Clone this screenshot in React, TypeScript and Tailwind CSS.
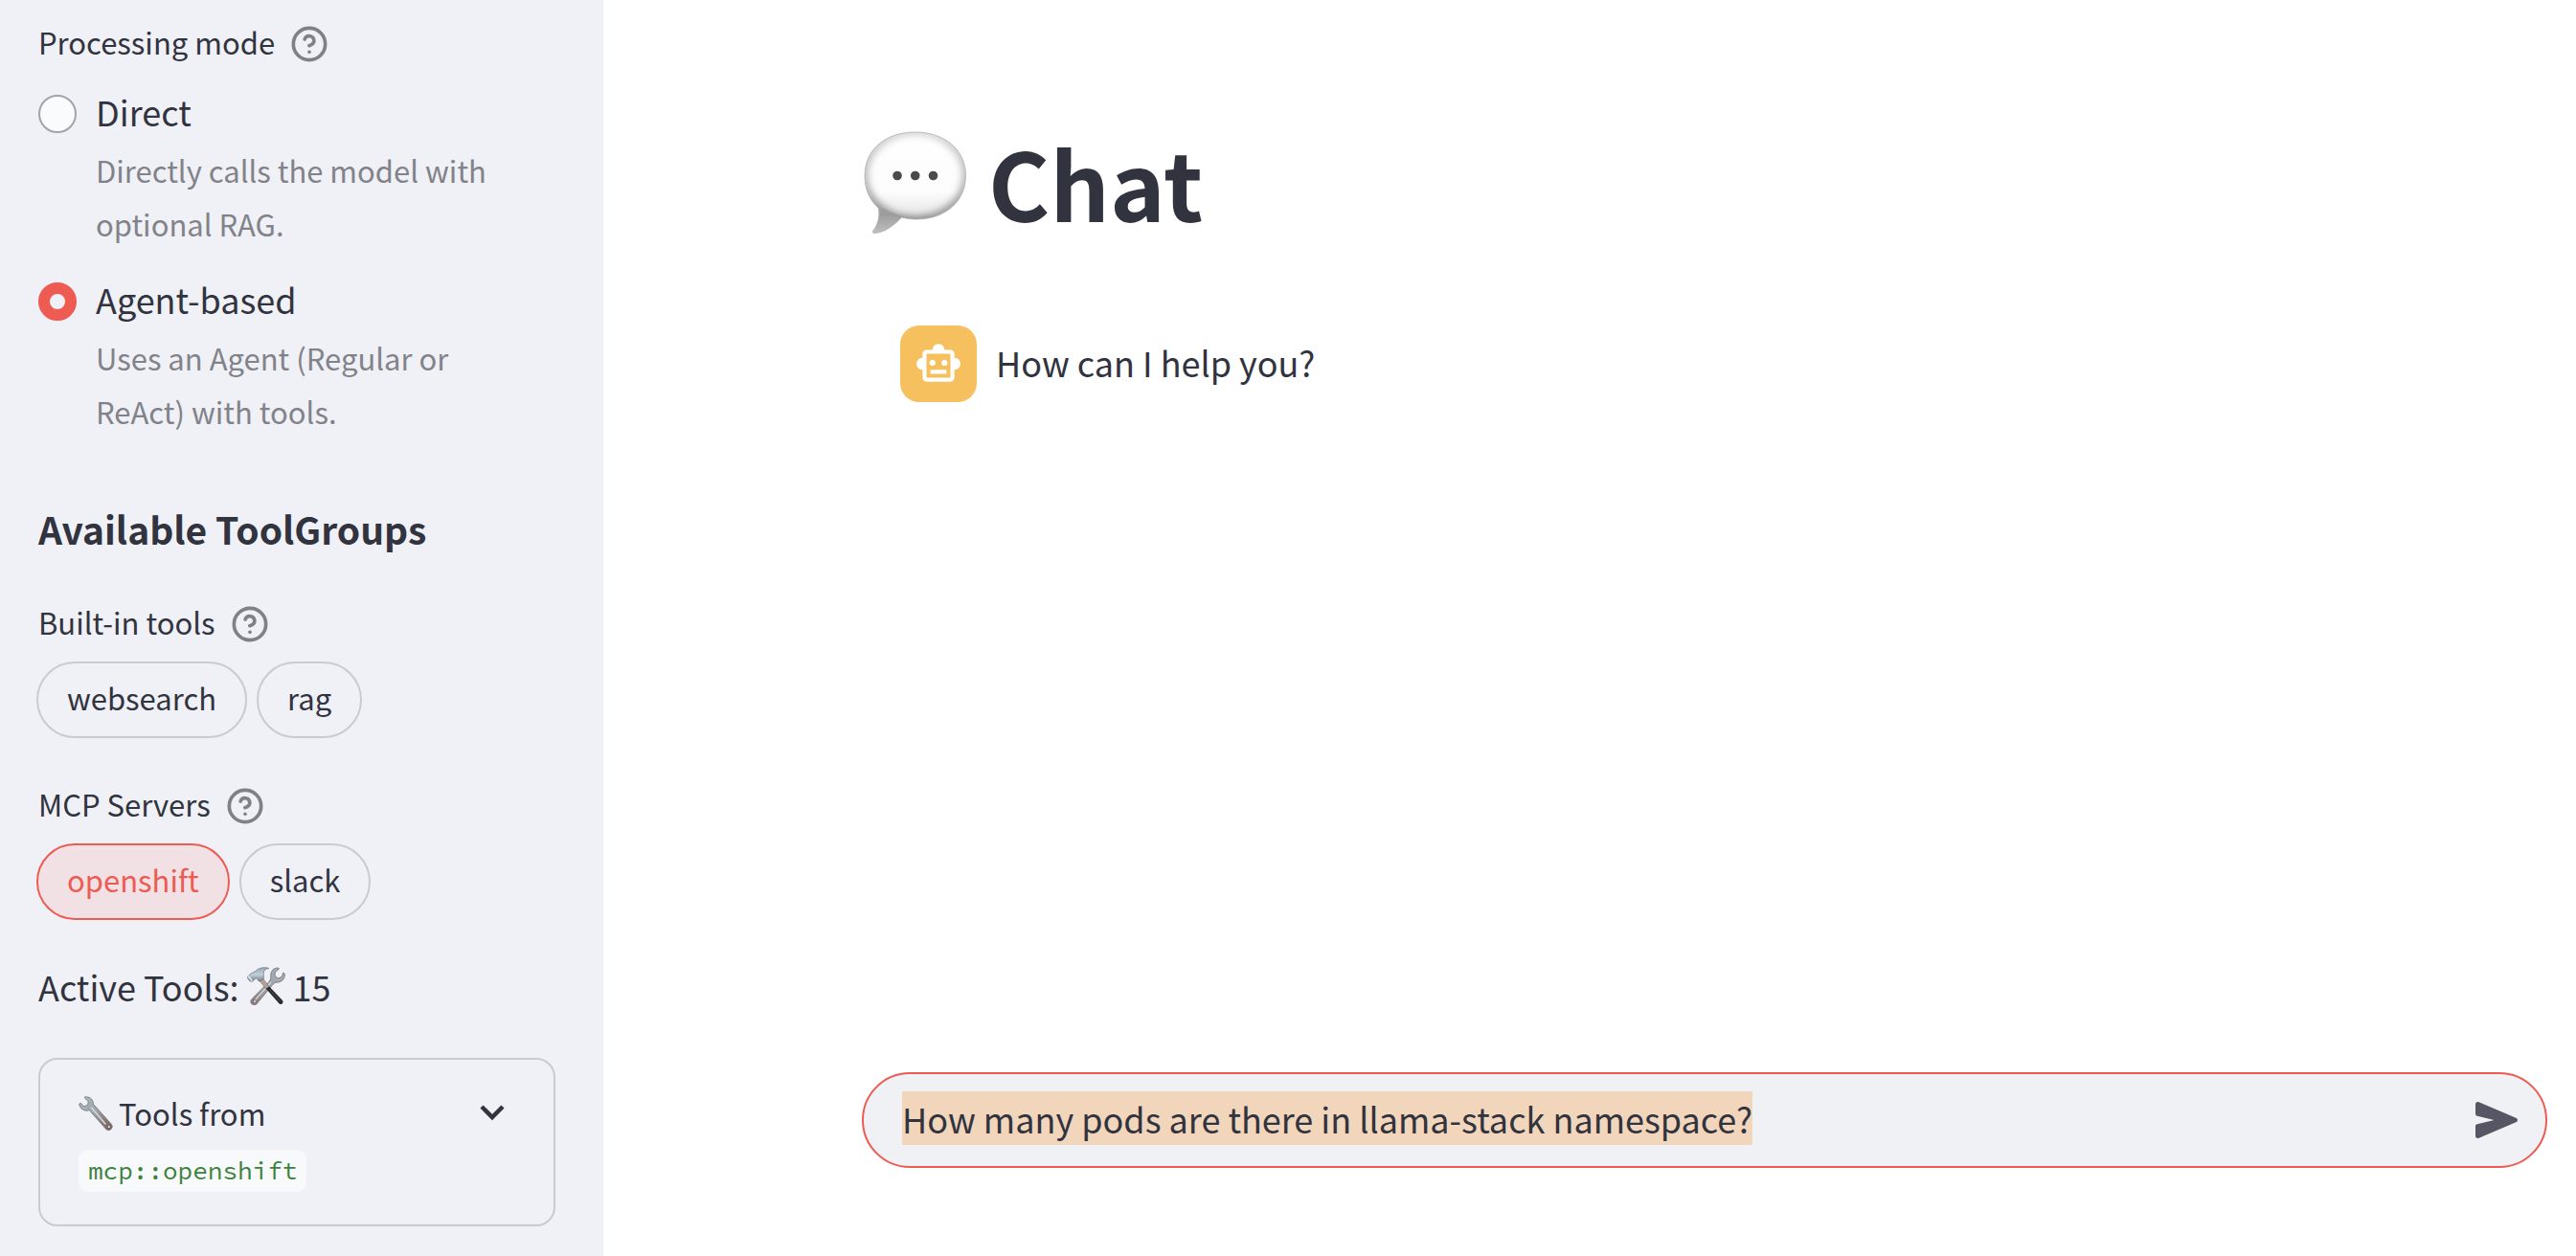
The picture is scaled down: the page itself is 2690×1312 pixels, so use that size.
import { useEffect, useRef, useState } from "react";
import { CircleHelp } from "lucide-react";
import { MdOutlineSmartToy } from "react-icons/md";

function HelpLabel({ text }: { text: string }) {
  return (
    <div className="flex h-14 items-center gap-4 text-[31px] leading-[56px]">
      <span>{text}</span>
      <button type="button" aria-label={`Help: ${text}`} className="mt-1 text-[#808188]">
        <CircleHelp className="size-10" strokeWidth={2.2} />
      </button>
    </div>
  );
}

function ModeOption(props: {
  id: string;
  label: string;
  caption: string;
  checked: boolean;
  onSelect: () => void;
}) {
  return (
    <div className="flex gap-5">
      <input
        type="radio"
        name="mode"
        id={props.id}
        checked={props.checked}
        onChange={props.onSelect}
        className="mt-[11px] size-10 shrink-0 appearance-none rounded-full border-2 border-[#a3a4ab] bg-[#fafbfd] checked:border-[12px] checked:border-[#ee5b53] checked:bg-[#f0f1f6]"
      />
      <label htmlFor={props.id} className="flex max-w-[440px] flex-col gap-[6px]">
        <span className="text-[36px] leading-[56px]">{props.label}</span>
        <span className="text-[31px] leading-[56px] text-[#82838a]">{props.caption}</span>
      </label>
    </div>
  );
}

function Pill({ label, active, onToggle }: { label: string; active: boolean; onToggle: () => void }) {
  return (
    <button
      type="button"
      aria-pressed={active}
      onClick={onToggle}
      className={
        active
          ? "h-20 rounded-full border-2 border-[#ee5b53] bg-[#f1e1e4] px-[30px] pb-1 text-[31px] text-[#ee5b53]"
          : "h-20 rounded-full border-2 border-[#cacbd0] px-[30px] pb-1 text-[31px]"
      }
    >
      {label}
    </button>
  );
}

function PillGroup({ title, names, initial }: { title: string; names: string[]; initial: string[] }) {
  const [selected, setSelected] = useState(initial);
  const toggle = (name: string) =>
    setSelected((now) => (now.includes(name) ? now.filter((n) => n !== name) : [...now, name]));
  return (
    <section className="flex flex-col gap-[13px]">
      <HelpLabel text={title} />
      <div className="-ml-0.5 flex gap-[10px]">
        {names.map((name) => (
          <Pill key={name} label={name} active={selected.includes(name)} onToggle={() => toggle(name)} />
        ))}
      </div>
    </section>
  );
}

function Wrench() {
  return (
    <svg viewBox="0 0 36 36" className="size-9 shrink-0" aria-hidden="true">
      <defs>
        <linearGradient id="wrench" x1="0" y1="0" x2="1" y2="1">
          <stop offset="0" stopColor="#aebbc5" />
          <stop offset=".45" stopColor="#9fa5ab" />
          <stop offset=".8" stopColor="#86706e" />
          <stop offset="1" stopColor="#6d5e5c" />
        </linearGradient>
      </defs>
      <path
        d="M6.5 1C11 0 15.500 3.200 15.400 8.300L34.500 29.500A3.900 3.900 0 0 1 29.200 35L11.200 14.600C6.500 16.600 1 13.200.8 8L2.500 7.300L5.200 10.700L9.600 9.500L10.300 5.500L6.500 2Z"
        fill="url(#wrench)"
        stroke="#747a80"
        strokeWidth=".9"
        strokeLinejoin="round"
      />
      <path d="M13.500 12L28 29" stroke="#d3d8dc" strokeWidth="1.600" strokeLinecap="round" />
      <circle cx="31.800" cy="32" r="1.500" fill="#f0f1f6" stroke="#665350" strokeWidth=".8" />
    </svg>
  );
}

function HammerAndWrench() {
  return (
    <svg viewBox="0 0 40 40" className="size-10 shrink-0" aria-hidden="true">
      <defs>
        <linearGradient id="steel" x1="1" y1="0" x2="0" y2="1">
          <stop offset="0" stopColor="#a9b1b9" />
          <stop offset=".5" stopColor="#a2a5aa" />
          <stop offset="1" stopColor="#8a7574" />
        </linearGradient>
        <linearGradient id="head" x1="0" y1="0" x2="0" y2="1">
          <stop offset="0" stopColor="#98a8b5" />
          <stop offset=".5" stopColor="#c3d0da" />
          <stop offset="1" stopColor="#6f7984" />
        </linearGradient>
      </defs>
      <path
        d="M32.600 1C28 1 24.500 4 24.800 9.500C25 12 24.400 13.600 23 15.400L5 33.600A3.600 3.600 0 1 0 10.600 38L27 18.200C28.500 16.500 30 16.200 32.500 16C37 15.500 39.800 12 39.200 7L37.600 6.200L36.300 10.300L32.200 12L28.900 9.300L29.300 5.400L33.400 2.200Z"
        fill="url(#steel)"
        stroke="#73777e"
        strokeWidth=".9"
        strokeLinejoin="round"
      />
      <path d="M24.500 16.500L9 34" stroke="#d4d5d8" strokeWidth="1.400" strokeLinecap="round" />
      <circle cx="8" cy="36" r="1.500" fill="#f0f1f6" stroke="#6d5f5f" strokeWidth=".8" />
      <path d="M13 14L16.500 12L23.500 21.500L20 23.500Z" fill="#b79f92" stroke="#746b68" strokeWidth=".6" />
      <path d="M19.800 22.800L23.200 20.400L37.200 35.200C38.400 37.500 36 40 33.700 38.600Z" fill="#26282b" />
      <path d="M23.500 23.500L34.500 36" stroke="#505356" strokeWidth="1" strokeLinecap="round" />
      <path
        d="M8.200 5C11.500 1 17.500-.2 23 1.400C19.500 1.800 17.400 3.600 17.200 6.400L17.400 12.600L13 15.400L9.400 11.800L5.400 15.200C3 15.600.4 13 .6 10.200L3.600 7.200Z"
        fill="url(#head)"
        stroke="#727d87"
        strokeWidth=".8"
        strokeLinejoin="round"
      />
      <path d="M1.500 10L5 14.300" stroke="#e6eef4" strokeWidth="1.500" strokeLinecap="round" />
    </svg>
  );
}

function SpeechBubble() {
  const body =
    "M53.500 1C23 1 1 19 1 46.500C1 62 7 73 15.500 80.500C17 90 14.500 98 9.500 104.500C9 106 10 106.500 11.500 106.500C22 106 32 98 39.500 90C45 91.500 50 92 56 92C86 91.500 106.500 73 106.500 46.500C106.500 19 84 1 53.500 1Z";
  return (
    <svg viewBox="0 0 108 108" className="size-[108px] shrink-0" aria-hidden="true">
      <defs>
        <clipPath id="bubble-clip">
          <path d={body} />
        </clipPath>
        <linearGradient id="bubble-fill" x1="0" y1="0" x2="0" y2="1">
          <stop offset="0" stopColor="#fff" />
          <stop offset=".6" stopColor="#fcfcfc" />
          <stop offset=".8" stopColor="#e8e8e8" />
          <stop offset="1" stopColor="#b0b0b0" />
        </linearGradient>
        <linearGradient id="bubble-edge" x1="0" y1="0" x2="0" y2="1">
          <stop offset="0" stopColor="#c4c4c4" />
          <stop offset=".5" stopColor="#a0a0a0" />
          <stop offset="1" stopColor="#6e6e6e" />
        </linearGradient>
        <linearGradient id="bubble-tail" x1="0" y1="0" x2="0" y2="1">
          <stop offset="0" stopColor="#8d8d8d" stopOpacity="0" />
          <stop offset=".35" stopColor="#9c9c9c" />
          <stop offset="1" stopColor="#c2c2c2" />
        </linearGradient>
        <filter id="bubble-soft" x="-20%" y="-20%" width="140%" height="140%">
          <feGaussianBlur stdDeviation="4.500" />
        </filter>
      </defs>
      <g clipPath="url(#bubble-clip)">
        <path d={body} fill="url(#bubble-fill)" />
        <ellipse
          cx="53.700"
          cy="46.500"
          rx="54"
          ry="47"
          fill="none"
          stroke="url(#bubble-edge)"
          strokeWidth="7"
          filter="url(#bubble-soft)"
        />
        <path d="M14 76Q26 86 42 89L36 108H4Z" fill="url(#bubble-tail)" />
      </g>
      <path d={body} fill="none" stroke="#b0b0b0" strokeWidth=".8" />
      <circle cx="35" cy="46.500" r="4.800" fill="#4a4a4a" />
      <circle cx="53.700" cy="46.500" r="4.800" fill="#4a4a4a" />
      <circle cx="72.500" cy="46.500" r="4.800" fill="#4a4a4a" />
    </svg>
  );
}

function Sidebar() {
  const [mode, setMode] = useState("agent");
  const [open, setOpen] = useState(false);
  return (
    <aside className="w-[630px] shrink-0 bg-[#f0f1f6] pt-4 pr-[50px] pb-[31px] pl-10">
      <div role="radiogroup" aria-label="Processing mode">
        <HelpLabel text="Processing mode" />
        <div className="mt-4 flex flex-col gap-[22px]">
          <ModeOption
            id="mode-direct"
            label="Direct"
            caption="Directly calls the model with optional RAG."
            checked={mode === "direct"}
            onSelect={() => setMode("direct")}
          />
          <ModeOption
            id="mode-agent"
            label="Agent-based"
            caption="Uses an Agent (Regular or ReAct) with tools."
            checked={mode === "agent"}
            onSelect={() => setMode("agent")}
          />
        </div>
      </div>

      <h3 className="mt-[66px] text-[39px] leading-[56px] font-bold">Available ToolGroups</h3>
      <div className="mt-[42px] flex flex-col gap-[41px]">
        <PillGroup title="Built-in tools" names={["websearch", "rag"]} initial={[]} />
        <PillGroup title="MCP Servers" names={["openshift", "slack"]} initial={["openshift"]} />
        <p className="flex items-center gap-2 text-[36px] leading-[56px]">
          Active Tools: <HammerAndWrench /> <span>15</span>
        </p>
      </div>

      <button
        type="button"
        aria-expanded={open}
        onClick={() => setOpen(!open)}
        className="mt-[47px] flex w-full items-start justify-between rounded-[20px] border-2 border-[#cacbd0] pt-7 pr-[50px] pb-[34px] pl-10 text-left"
      >
        <span className="flex flex-col items-start gap-[10px]">
          <span className="flex items-center gap-[6px] text-[31px] leading-[56px]">
            <Wrench /> Tools from
          </span>
          <code className="rounded-[10px] bg-[#f8f9fb] px-[10px] font-['Source_Code_Pro','Noto_Sans_Mono_CJK_SC','DejaVu_Sans_Mono',monospace] text-[26px] leading-[44px] text-[#3c823d]">
            mcp::openshift
          </code>
        </span>
        <svg viewBox="0 0 28 18" className="mt-[18px] h-[18px] w-7" aria-hidden="true">
          <path d="M3 3L14 14L25 3" fill="none" stroke="#31333f" strokeWidth="4.500" />
        </svg>
      </button>
    </aside>
  );
}

function ChatInput() {
  const [value, setValue] = useState("How many pods are there in llama-stack namespace?");
  const box = useRef<HTMLTextAreaElement>(null);
  useEffect(() => {
    box.current?.focus();
    box.current?.select();
  }, []);
  return (
    <form
      onSubmit={(event) => event.preventDefault()}
      className="flex h-[100px] items-center rounded-full border-2 border-[#ee5b53] bg-[#f0f1f5] pr-7 pl-10"
    >
      <textarea
        ref={box}
        rows={1}
        aria-label="Chat message"
        value={value}
        onChange={(event) => setValue(event.target.value)}
        className="mb-1 block h-14 min-w-0 flex-1 resize-none overflow-hidden bg-transparent text-[36px] leading-[56px] outline-none selection:bg-[#f2d6bcfe] selection:text-[#31333f]"
      />
      <button type="submit" aria-label="Send" className="text-[#555765]">
        <svg viewBox="0 0 46 40" className="h-10 w-[46px]" fill="currentColor" aria-hidden="true">
          <path d="M1 3.600C1 1.500 2.800.6 4.700 1.300L43.300 17.700C45.600 18.700 45.600 21.300 43.300 22.300L4.700 38.700C2.800 39.400 1 38.500 1 36.400V26.500C1 25.300 1.700 24.500 2.900 24.200L20.500 20L2.900 15.800C1.700 15.500 1 14.700 1 13.500Z" />
        </svg>
      </button>
    </form>
  );
}

export default function App() {
  return (
    <div className="flex min-h-screen bg-white font-['Source_Sans_Pro','Noto_Sans_CJK_SC',sans-serif] text-[#31333f]">
      <Sidebar />
      <main className="flex min-w-0 flex-1 flex-col justify-between pt-[137px] pr-[30px] pb-[92px] pl-[270px]">
        <div>
          <h1 className="flex items-start gap-[22px] pl-0.5 text-[98px] leading-[104px] font-bold">
            <SpeechBubble /> Chat
          </h1>
          <div className="mt-[95px] flex items-center gap-5 px-10">
            <div className="flex size-20 shrink-0 items-center justify-center rounded-[20px] bg-[#f6c05f] text-white">
              <MdOutlineSmartToy className="size-[50px]" />
            </div>
            <p className="mb-1 text-[36px] leading-[56px]">How can I help you?</p>
          </div>
        </div>
        <ChatInput />
      </main>
    </div>
  );
}
